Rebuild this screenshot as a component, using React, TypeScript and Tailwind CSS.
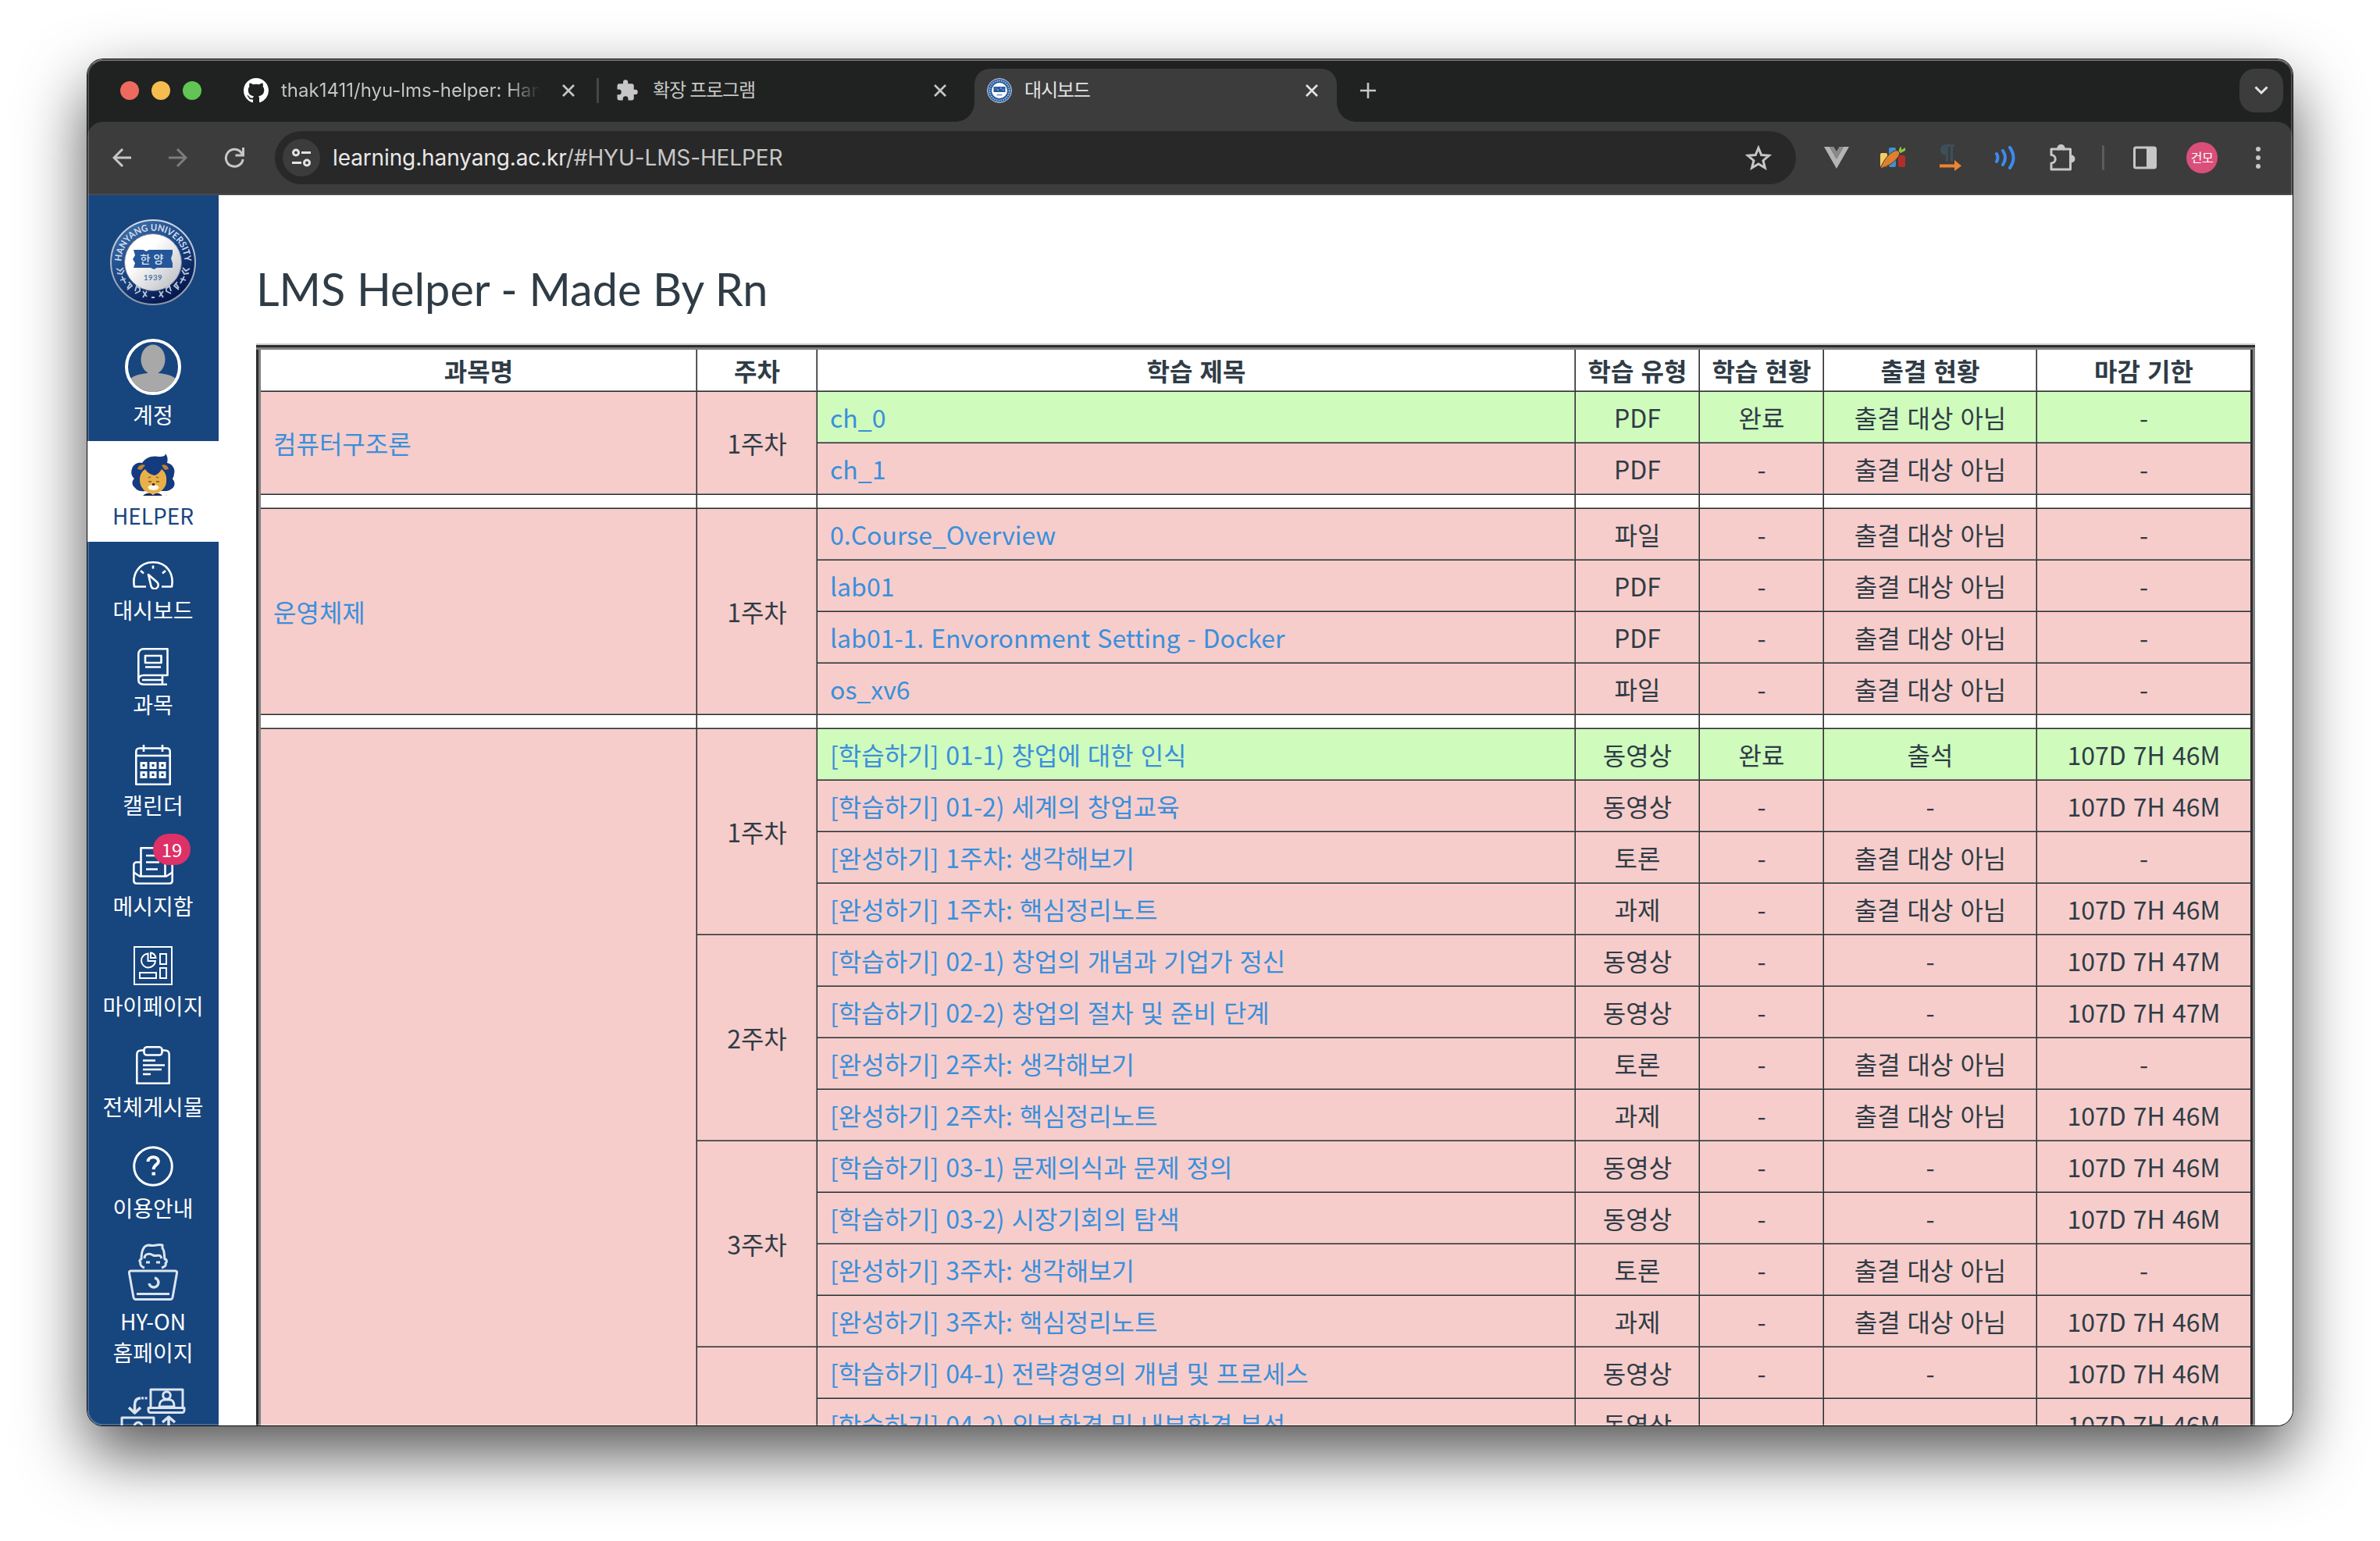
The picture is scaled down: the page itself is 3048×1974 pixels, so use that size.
import React from "react";

type Row = { title: string; type: string; status?: string; attend?: string; due?: string; done?: boolean };
type Week = { week: string; rows: Row[] };
type Subject = { name: string; weeks: Week[] };

const NA = "출결 대상 아님";

const weekRows = (n: number, a: string, b: string, due: string): Row[] => [
  { title: `[학습하기] 0${n}-1) ${a}`, type: "동영상", due },
  { title: `[학습하기] 0${n}-2) ${b}`, type: "동영상", due },
  { title: `[완성하기] ${n}주차: 생각해보기`, type: "토론", attend: NA },
  { title: `[완성하기] ${n}주차: 핵심정리노트`, type: "과제", attend: NA, due: "107D 7H 46M" },
];

const week1 = weekRows(1, "창업에 대한 인식", "세계의 창업교육", "107D 7H 46M");
week1[0] = { ...week1[0], done: true, status: "완료", attend: "출석" };

const subjects: Subject[] = [
  {
    name: "컴퓨터구조론",
    weeks: [
      {
        week: "1주차",
        rows: [
          { title: "ch_0", type: "PDF", status: "완료", attend: NA, done: true },
          { title: "ch_1", type: "PDF", attend: NA },
        ],
      },
    ],
  },
  {
    name: "운영체제",
    weeks: [
      {
        week: "1주차",
        rows: [
          { title: "0.Course_Overview", type: "파일", attend: NA },
          { title: "lab01", type: "PDF", attend: NA },
          { title: "lab01-1. Envoronment Setting - Docker", type: "PDF", attend: NA },
          { title: "os_xv6", type: "파일", attend: NA },
        ],
      },
    ],
  },
  {
    name: "",
    weeks: [
      { week: "1주차", rows: week1 },
      { week: "2주차", rows: weekRows(2, "창업의 개념과 기업가 정신", "창업의 절차 및 준비 단계", "107D 7H 47M") },
      { week: "3주차", rows: weekRows(3, "문제의식과 문제 정의", "시장기회의 탐색", "107D 7H 46M") },
      { week: "", rows: weekRows(4, "전략경영의 개념 및 프로세스", "외부환경 및 내부환경 분석", "107D 7H 46M") },
    ],
  },
];

const CELL = "flex shrink-0 items-center border-r border-b border-[#2c2c2c] pb-[2px] shadow-[inset_-1px_-1px_0_#808080]";
const LAST = "flex shrink-0 items-center border-b border-[#2c2c2c] pb-[2px] shadow-[inset_0_-1px_0_#808080]";

function TableHeader() {
  return (
    <div className="flex h-[54px] bg-white font-bold">
      <div className={`${CELL} w-[559px] justify-center`}>과목명</div>
      <div className={`${CELL} w-[154px] justify-center`}>주차</div>
      <div className={`${CELL} w-[971px] justify-center`}>학습 제목</div>
      <div className={`${CELL} w-[159px] justify-center`}>학습 유형</div>
      <div className={`${CELL} w-[159px] justify-center`}>학습 현황</div>
      <div className={`${CELL} w-[273px] justify-center`}>출결 현황</div>
      <div className={`${LAST} w-[273px] justify-center`}>마감 기한</div>
    </div>
  );
}

function Spacer() {
  return (
    <div className="flex h-[18px] bg-white">
      <div className={`${CELL} w-[559px]`} />
      <div className={`${CELL} w-[154px]`} />
      <div className={`${CELL} w-[971px]`} />
      <div className={`${CELL} w-[159px]`} />
      <div className={`${CELL} w-[159px]`} />
      <div className={`${CELL} w-[273px]`} />
      <div className={`${LAST} w-[273px]`} />
    </div>
  );
}

function LessonRow({ row }: { row: Row }) {
  return (
    <div className={`flex h-[66px] ${row.done ? "bg-[#cffbbd]" : "bg-[#f6cdcb]"}`}>
      <div className={`${CELL} w-[971px] pl-4 text-[#3a8fdc]`}>{row.title}</div>
      <div className={`${CELL} w-[159px] justify-center`}>{row.type}</div>
      <div className={`${CELL} w-[159px] justify-center`}>{row.status ?? "-"}</div>
      <div className={`${CELL} w-[273px] justify-center`}>{row.attend ?? "-"}</div>
      <div className={`${LAST} w-[273px] justify-center`}>{row.due ?? "-"}</div>
    </div>
  );
}

function LessonTable() {
  return (
    <div className="w-[2560px] border-t-2 border-[#c7cdd1] font-['Noto_Sans_CJK_KR',sans-serif] text-[32px] leading-[48px] text-[#2f3c46] [word-spacing:1.8px]">
      <div className="h-[3px] bg-[#2c2c2c]" />
      <div className="h-[3px] bg-[#808080]" />
      <div className="flex">
        <div className="w-[3px] shrink-0 bg-[#2c2c2c]" />
        <div className="w-[3px] shrink-0 bg-[#808080]" />
        <div className="w-[2548px] shrink-0">
          <TableHeader />
          {subjects.map((s, i) => (
            <React.Fragment key={i}>
              {i > 0 && <Spacer />}
              <div className="flex">
                <div className={`${CELL} w-[559px] bg-[#f6cdcb] pl-4 text-[#3a8fdc]`}>{s.name}</div>
                <div className="flex flex-col">
                  {s.weeks.map((w, j) => (
                    <div key={j} className="flex">
                      <div className={`${CELL} w-[154px] justify-center bg-[#f6cdcb]`}>{w.week}</div>
                      <div className="flex flex-col">
                        {w.rows.map((r) => (
                          <LessonRow key={r.title} row={r} />
                        ))}
                      </div>
                    </div>
                  ))}
                </div>
              </div>
            </React.Fragment>
          ))}
        </div>
        <div className="w-[3px] shrink-0 bg-[#2c2c2c]" />
        <div className="w-[3px] shrink-0 bg-[#808080]" />
      </div>
    </div>
  );
}

/* ---------- sidebar drawings ---------- */

function Seal() {
  return (
    <svg viewBox="0 0 110 110" className="h-[110px] w-[110px]">
      <defs>
        <linearGradient id="ring" x1="0" y1="0" x2="0.6" y2="1">
          <stop offset="0" stopColor="#4a78b2" />
          <stop offset="0.5" stopColor="#1c4a8a" />
          <stop offset="1" stopColor="#06174d" />
        </linearGradient>
        <linearGradient id="edge" x1="0" y1="0" x2="0" y2="1">
          <stop offset="0" stopColor="#d3dbe6" />
          <stop offset="1" stopColor="#8b93a8" />
        </linearGradient>
        <linearGradient id="disc" x1="0" y1="0" x2="1" y2="1">
          <stop offset="0.35" stopColor="#ffffff" />
          <stop offset="1" stopColor="#b4b6bc" />
        </linearGradient>
        <path id="arcTop" d="M14.500 55a40.500 40.500 0 0 1 81 0" />
      </defs>
      <circle cx="55" cy="55" r="54" fill="url(#ring)" stroke="url(#edge)" strokeWidth="2" />
      <circle cx="55" cy="55" r="36.500" fill="url(#disc)" stroke="#6d7d98" strokeWidth="1" />
      <text fill="#d3deeb" fontSize="12" fontWeight="700" fontFamily="Lato, sans-serif">
        <textPath href="#arcTop" startOffset="1" textLength="125" lengthAdjust="spacingAndGlyphs">HANYANG UNIVERSITY</textPath>
      </text>
      <g stroke="#b9c6d8" strokeWidth="1.800" fill="none">
        <path d="M8 63l5 3l4-4M9 69l6 1l3-5M13 78l7-2M15 73l5 9M22 88l4-6M24 80l4 5l-6 5M32 92l2-7l3 3M32 95l6-3l0-6M42 92l5 7M47 92l-5 8" />
        <path d="M102 63l-5 3l-4-4M101 69l-6 1l-3-5M97 78l-7-2M95 73l-5 9M88 88l-4-6M86 80l-4 5l6 5M78 92l-2-7l-3 3M78 95l-6-3l0-6M68 92l-5 7M63 92l5 8M53 100h4" />
      </g>
      <path d="M30 39h13l3 2l4-2h30v5l-2 6l2 6v6H60l-4 2l-4-2H30l2-6l-3-5l3-5z" fill="#24569a" />
      <text x="55.500" y="56" textAnchor="middle" fill="#dfe8f2" fontSize="14" fontWeight="500" letterSpacing="4" fontFamily="'Noto Sans CJK KR', sans-serif">한양</text>
      <text x="55" y="78" textAnchor="middle" fill="#4f74a8" fontSize="9.500" fontWeight="700" letterSpacing="0.500" fontFamily="Lato, sans-serif">1939</text>
    </svg>
  );
}

function Avatar() {
  return (
    <svg viewBox="0 0 72 72" className="h-[72px] w-[72px]">
      <defs>
        <clipPath id="face"><circle cx="36" cy="36" r="32" /></clipPath>
      </defs>
      <g clipPath="url(#face)" fill="#a8a8a8">
        <ellipse cx="36" cy="26.500" rx="15.500" ry="19" />
        <path d="M29 40h14v4c12 1 20 4 24 9v19H5V53c4-5 12-8 24-9z" />
      </g>
      <circle cx="36" cy="36" r="34" fill="none" stroke="#fff" strokeWidth="4" />
    </svg>
  );
}

function Lion() {
  return (
    <svg viewBox="0 0 56 54" className="h-[54px] w-[56px]">
      <path d="M14 12C18 5 27 2 36 4C41 4 44 3 44 0C47 4 47 8 46 12C52 13 57 19 55 26C55 29 53 31 53 33C57 36 56 43 52 45C48 49 42 48 38 48H18C13 49 8 48 5 44C1 41 0 36 4 32C0 29 -1 23 2 17C5 12 10 11 14 12Z" fill="#143a80" />
      <path d="M8 20C9 15 14 13 18 15L13 21ZM48 20C47 15 43 13 39 15L43 21Z" fill="#b98432" />
      <path d="M11 34C11 28 13 23 18 20C20 24 25 27 30 28C33 27 37 24 39 20C43 23 46 28 45 36C45 44 37 51 28 52C19 51 11 44 11 34Z" fill="#e9b04a" />
      <path d="M22 36h4M32 36h4M22 31l3-1M35 31l-3-1" stroke="#8f6a30" strokeWidth="1.800" />
      <ellipse cx="28.500" cy="43.500" rx="7" ry="3.500" fill="#fff8e8" />
      <ellipse cx="28.500" cy="39.500" rx="2" ry="1.500" fill="#3c2e1c" />
      <path d="M15 54C20 50 24 50 28 53C32 50 36 50 40 54Z" fill="#14285c" />
      <path d="M44 54l2-2v2z" fill="#c9cfdc" />
    </svg>
  );
}

const LINE = { fill: "none", stroke: "#fff", strokeWidth: 2.600, strokeLinecap: "butt" as const, strokeLinejoin: "round" as const };

function Gauge() {
  return (
    <svg viewBox="0 0 52 36" className="h-[36px] w-[52px]" {...LINE}>
      <path d="M17 32.500H2C-1 16 8 1.300 26 1.300S53 16 50 32.500H37" />
      <path d="M26 5.500v4M10 12l4 3.500M42 12l-4 3.500M20 17l11.500 10c2 2.500 1.500 6-1 7.500s-6 .5-7-2.500z" />
    </svg>
  );
}

function Book() {
  return (
    <svg viewBox="0 0 40 48" className="h-[48px] w-[40px]" {...LINE}>
      <path d="M1.300 41V8C1.300 4 4 1.300 8 1.300H38.500V35H8C4 35 1.300 37 1.300 41S4 46.700 8 46.700H38M32 35v11.500M6 41H32" />
      <path d="M10 10H30.500V19H10ZM10 24.500H30" />
    </svg>
  );
}

function Calendar() {
  return (
    <svg viewBox="0 0 46 52" className="h-[52px] w-[46px]" {...LINE}>
      <path d="M1.300 50.700V9C1.300 6 3 4.500 5.500 4.500H40.500C43 4.500 44.700 6 44.700 9V50.700ZM1.300 14H44.700M11 0V9M35 0V9" />
      <g strokeWidth="3" strokeLinejoin="miter">
        <path d="M8 23.500h6v6h-6zM20 23.500h6v6h-6zM32 23.500h6v6h-6zM8 35.500h6v6h-6zM20 35.500h6v6h-6zM32 35.500h6v6h-6z" />
      </g>
    </svg>
  );
}

function Inbox() {
  return (
    <svg viewBox="0 0 52 48" className="h-[48px] w-[52px]" {...LINE}>
      <path d="M10.500 37V1.300H41.500V37" />
      <path d="M10 19.500H5C2.500 19.500 1.300 21 1.300 23.500V43C1.300 45.500 2.500 46.700 5 46.700H47C49.500 46.700 50.700 45.500 50.700 43V23.500C50.700 21 49.500 19.500 47 19.500H42" />
      <path d="M1.300 32.500L9 37.500H43L50.700 32.500M17 11H34M17 19.500H34M17 28.500H32" />
    </svg>
  );
}

function MyPage() {
  return (
    <svg viewBox="0 0 50 50" className="h-[50px] w-[50px]" {...LINE} strokeWidth={2} strokeLinejoin="miter">
      <path d="M1 1H49V49H1Z" />
      <path d="M18.500 9.500A9 9 0 1 0 28 19H18.500ZM22 8.500A8 8 0 0 1 28.500 15H22ZM34 10H42V23H34ZM34 28H42V41H34ZM8 34H29V41H8Z" />
    </svg>
  );
}

function Clipboard() {
  return (
    <svg viewBox="0 0 44 49" className="h-[49px] w-[44px]" {...LINE}>
      <path d="M11 5.500H7C3 5.500 1.300 7.500 1.300 11V47.700H42.700V11C42.700 7.500 41 5.500 37 5.500H33" />
      <path d="M14 1.300H30C32 1.300 33.500 3 33.500 5V8C33.500 10 32 11.500 30 11.500H14C12 11.500 10.500 10 10.500 8V5C10.500 3 12 1.300 14 1.300ZM9 18.500H25M9 24.500H37M9 30H33M9 36H19" />
    </svg>
  );
}

function Help() {
  return (
    <svg viewBox="0 0 52 54" className="h-[54px] w-[52px]" {...LINE} strokeWidth={3}>
      <circle cx="26" cy="27" r="24.300" />
      <path d="M19.500 21C19.500 13.500 33 13.500 33 20.500C33 25 26.700 25 26.700 31" strokeWidth="4" />
      <path d="M26.700 34.500v4" strokeWidth="4.500" />
    </svg>
  );
}

function LaptopMan() {
  return (
    <svg viewBox="0 0 64 73" className="h-[73px] w-[64px]" {...LINE} strokeWidth={3} stroke="#dbe4ef">
      <path d="M21 31C17 30 15 27 16 24C14 23 15 20 17 20C17 10 19 2 27 2C33 4 39 0 44 2V6C47 9 46 14 47 20C50 20 50 24 48 25C49 28 47 30 43 31" />
      <path d="M21 19C21 13 27 12 32 15C37 17 41 12 43 19M23 24H28M36 24H41" />
      <path d="M4 35H60C62 35 63 36 62.500 38L57 69C56.500 71 56 71.500 54 71.500H10C8 71.500 7.500 71 7 69L1.500 38C1 36 2 35 4 35ZM11 64.500H53" />
      <path d="M34 44A6 6 0 1 1 27 51" strokeWidth="3.500" />
    </svg>
  );
}

function Remote() {
  return (
    <svg viewBox="0 0 84 50" className="h-[50px] w-[84px]" {...LINE} strokeWidth={3} stroke="#dbe4ef">
      <path d="M39 24V2H80V24M36 25.500H82V28C82 31 81 31.500 79 31.500H39C37 31.500 36 31 36 28ZM50 24C50 16 54 15 58 15H62C66 15 69 16 69 24Z" />
      <circle cx="59.500" cy="9.500" r="4.800" />
      <path d="M2 50V38H43V50M18 50C18 42 28 42 28 50" />
      <path d="M26 13C21 13 18.500 16 18.500 22V31M11 25L18.500 32L26 25" strokeWidth="3.500" />
      <path d="M27 13H36" strokeDasharray="3 1.500" />
      <path d="M62 50V38M54 44L62 37L70 44" strokeWidth="3.500" />
    </svg>
  );
}

function Item({ icon, label, cls, gap, active }: { icon: React.ReactNode; label: string; cls: string; gap: string; active?: boolean }) {
  return (
    <div className={`flex w-full shrink-0 flex-col items-center ${cls} ${active ? "bg-white text-[#17457e]" : "text-white"}`}>
      {icon}
      <div className={`whitespace-pre text-center leading-[40px] ${gap}`}>{label}</div>
    </div>
  );
}

function Sidebar() {
  return (
    <nav className="flex w-[168px] shrink-0 flex-col items-center bg-[#17457e] font-['Noto_Sans_CJK_KR',sans-serif] text-[28px]">
      <div className="flex h-[168px] shrink-0 pt-[31px]">
        <Seal />
      </div>
      <Item cls="h-[147px] pt-4" gap="mt-[5px]" icon={<Avatar />} label="계정" />
      <Item cls="h-[129px] pt-4" gap="mt-[5px]" icon={<Lion />} label="HELPER" active />
      <Item cls="h-[124px] pt-[25px]" gap="mt-1.5" icon={<Gauge />} label="대시보드" />
      <Item cls="h-[124px] pt-3" gap="mt-1" icon={<Book />} label="과목" />
      <Item cls="h-[131px] pt-3" gap="mt-[5px]" icon={<Calendar />} label="캘린더" />
      <Item
        cls="h-[127px] pt-3"
        gap="mt-[7px]"
        label="메시지함"
        icon={
          <div className="relative">
            <Inbox />
            <span className="absolute -top-[17px] left-[26px] flex h-10 w-12 items-center justify-center rounded-full bg-[#dd3167] text-[24px] leading-none">19</span>
          </div>
        }
      />
      <Item cls="h-[128px] pt-3" gap="mt-1.5" icon={<MyPage />} label="마이페이지" />
      <Item cls="h-[127px] pt-3" gap="mt-2" icon={<Clipboard />} label="전체게시물" />
      <Item cls="h-[126px] pt-3" gap="mt-1.5" icon={<Help />} label="이용안내" />
      <Item cls="h-[186px] pt-3" gap="mt-1.5" icon={<LaptopMan />} label={"HY-ON\n홈페이지"} />
      <Item cls="h-[120px] pt-[11px]" gap="mt-1" icon={<Remote />} label="" />
    </nav>
  );
}

/* ---------- browser chrome ---------- */

function Cross({ color }: { color: string }) {
  return (
    <svg viewBox="0 0 16 16" className="h-4 w-4 shrink-0" stroke={color} strokeWidth="2.600" fill="none">
      <path d="M1 1L15 15M15 1L1 15" />
    </svg>
  );
}

function MiniSeal() {
  return (
    <svg viewBox="0 0 32 32" className="h-8 w-8 shrink-0">
      <circle cx="16" cy="16" r="15.500" fill="#2a5a9c" stroke="#c5d3e6" strokeWidth="1" />
      <circle cx="16" cy="16" r="12.700" fill="none" stroke="#a9bfdc" strokeWidth="2" strokeDasharray="1.500 1.300" />
      <circle cx="16" cy="16" r="10" fill="#fff" />
      <path d="M8.500 11h15v7h-15z" fill="#28599b" />
      <path d="M11 13h1M13 15h2M17 13h2M19.500 15h2" stroke="#8fadd2" strokeWidth="1.500" />
      <path d="M12.500 21.500h7" stroke="#86a3cb" strokeWidth="2" />
    </svg>
  );
}

function TabStrip() {
  return (
    <div className="flex h-[80px] bg-[#202221] text-[24px] text-[#c7c7c7]">
      <div className="flex w-[200px] shrink-0 items-center gap-4 pl-[42px]">
        <span className="h-6 w-6 rounded-full bg-[#ed6a5e]" />
        <span className="h-6 w-6 rounded-full bg-[#f5bd4f]" />
        <span className="h-6 w-6 rounded-full bg-[#61c454]" />
      </div>
      <div className="flex w-[452px] shrink-0 items-center">
        <svg viewBox="0 0 16 16" className="h-8 w-8 shrink-0" fill="#fff">
          <path d="M8 0C3.580 0 0 3.580 0 8c0 3.540 2.290 6.530 5.470 7.590.4.070.55-.17.55-.38 0-.19-.01-.82-.01-1.490-2.010.37-2.530-.49-2.690-.94-.09-.23-.48-.94-.82-1.130-.28-.15-.68-.52-.01-.53.63-.01 1.080.58 1.230.82.72 1.210 1.870.87 2.330.66.07-.52.28-.87.51-1.070-1.780-.2-3.640-.89-3.640-3.950 0-.87.31-1.590.82-2.150-.08-.2-.36-1.020.08-2.120 0 0 .67-.21 2.200.82.640-.18 1.320-.27 2-.27s1.360.09 2 .27c1.530-1.040 2.200-.82 2.200-.82.44 1.100.16 1.920.08 2.120.51.56.82 1.270.82 2.150 0 3.070-1.870 3.750-3.650 3.950.29.25.54.73.54 1.480 0 1.070-.01 1.930-.01 2.200 0 .21.15.46.55.38A8.010 8.010 0 0 0 16 8c0-4.420-3.580-8-8-8z" />
        </svg>
        <div className="ml-4 w-[332px] overflow-hidden whitespace-nowrap bg-gradient-to-r from-[#c7c7c7] from-88% to-[#202221] bg-clip-text text-transparent">
          thak1411/hyu-lms-helper: Hanyang
        </div>
        <span className="ml-[28px] flex"><Cross color="#c7c7c7" /></span>
      </div>
      <div className="flex w-[484px] shrink-0 items-center">
        <span className="h-8 w-[3px] bg-[#454746]" />
        <svg viewBox="0 0 24 24" className="ml-[21px] h-[30px] w-[30px] shrink-0" fill="#c7c7c7">
          <path d="M20.500 11H19V7c0-1.100-.9-2-2-2h-4V3.500a2.500 2.500 0 0 0-5 0V5H4c-1.100 0-2 .9-2 2v3.800h1.500a2.700 2.700 0 0 1 0 5.400H2V20c0 1.100.9 2 2 2h3.800v-1.500a2.700 2.700 0 0 1 5.400 0V22H17c1.100 0 2-.9 2-2v-4h1.500a2.500 2.500 0 0 0 0-5z" />
        </svg>
        <span className="ml-[18px] w-[360px] whitespace-nowrap tracking-[-1.2px]">확장 프로그램</span>
        <Cross color="#c7c7c7" />
      </div>
      <div className="relative mt-3 flex h-[68px] w-[464px] shrink-0 items-center rounded-t-[20px] bg-[#3c3c3c] pb-3 pl-4 text-[#e3e3e3]">
        <span className="absolute bottom-0 -left-6 h-6 w-6 bg-[radial-gradient(circle_at_0_0,transparent_23.5px,#3c3c3c_24px)]" />
        <span className="absolute bottom-0 -right-6 h-6 w-6 bg-[radial-gradient(circle_at_100%_0,transparent_23.5px,#3c3c3c_24px)]" />
        <MiniSeal />
        <span className="ml-4 w-[360px] whitespace-nowrap tracking-[-1.2px]">대시보드</span>
        <Cross color="#e3e3e3" />
      </div>
      <svg viewBox="0 0 20 20" className="mt-[30px] ml-[30px] h-5 w-5" stroke="#c7c7c7" strokeWidth="2.600" fill="none">
        <path d="M10 0V20M0 10H20" />
      </svg>
      <div className="mt-3 mr-3 ml-auto flex h-14 w-14 items-center justify-center rounded-[20px] bg-[#3c3c3c]">
        <svg viewBox="0 0 18 12" className="h-3 w-[18px]" stroke="#e3e3e3" strokeWidth="3" fill="none">
          <path d="M1.500 1.500L9 9L16.500 1.500" />
        </svg>
      </div>
    </div>
  );
}

const GREY = "#c7c7c7";

function Toolbar() {
  return (
    <div className="bg-[#202221]">
      <div className="flex h-[94px] items-center rounded-t-[20px] border-b-2 border-[#4a4a4a] bg-[#3c3c3c]">
        <svg viewBox="0 0 24 24" className="ml-8 h-6 w-6" stroke={GREY} strokeWidth="3" fill="none">
          <path d="M24 12H2.500M13 1L2 12L13 23" />
        </svg>
        <svg viewBox="0 0 24 24" className="ml-12 h-6 w-6" stroke="#7c7c7c" strokeWidth="3" fill="none">
          <path d="M0 12H21.500M11 1L22 12L11 23" />
        </svg>
        <svg viewBox="0 0 26 26" className="ml-[47px] h-[26px] w-[26px]" stroke={GREY} strokeWidth="3" fill="none">
          <path d="M24.200 15A11 11 0 1 1 22 6.500L24 9M24.500 0V10H14.500" />
        </svg>
        <div className="ml-[39px] flex h-[68px] w-[1948px] items-center rounded-full bg-[#282828] pl-[10px] text-[28px] text-[#c7c7c7]">
          <span className="flex h-12 w-12 items-center justify-center rounded-full bg-[#3c3c3c]">
            <svg viewBox="0 0 24 24" className="h-6 w-6" stroke="#e3e3e3" strokeWidth="3" fill="none">
              <circle cx="5" cy="5.500" r="3.500" />
              <circle cx="19" cy="18.500" r="3.500" />
              <path d="M12 5.500H24M0 18.500H12" />
            </svg>
          </span>
          <span className="ml-4 whitespace-nowrap tracking-[-0.12px]">
            <span className="text-[#e8e8e8]">learning.hanyang.ac.kr</span>/#HYU-LMS-HELPER
          </span>
          <svg viewBox="0 0 34 32" className="mr-[31px] ml-auto h-8 w-[34px]" stroke={GREY} strokeWidth="3" fill="none" strokeLinejoin="miter">
            <path d="M17 3.500L20.700 12.600L30.500 13.300L23 19.700L25.400 29L17 24L8.600 29L11 19.700L3.500 13.300L13.300 12.600Z" />
          </svg>
        </div>
        <svg viewBox="0 0 32 28" className="ml-9 h-7 w-8">
          <path d="M0 0H7L16 15.500L25 0H32L16 28Z" fill="#b4b4b4" />
          <path d="M7 0H12.500L16 6L19.500 0H25L16 15.500Z" fill="#8a8a8a" />
        </svg>
        <svg viewBox="0 0 32 32" className="ml-10 h-8 w-8">
          <rect x="0" y="10" width="9" height="18" rx="2" fill="#f3cf63" />
          <rect x="11" y="3" width="9" height="25" rx="2" fill="#3f93cf" />
          <rect x="23" y="13" width="9" height="15" rx="2" fill="#b32d2d" />
          <path d="M23 9L25 3L27 2L27 6L32 3V7L26 10Z" fill="#8fc43f" />
          <path d="M0 30C3 22 10 10 19 7C23 6 26 9 24 13C20 21 10 27 0 30Z" fill="#e0802e" stroke="#3c3c3c" strokeWidth="1" />
        </svg>
        <svg viewBox="0 0 28 34" className="ml-[44px] h-[34px] w-7">
          <path d="M19 0H8A7 7 0 0 0 8 14V22H11V3H14V22H17V3H19Z" fill="#3d4f59" />
          <path d="M0 25.500H19V20L28 27.500L19 34V29.500H0Z" fill="#ec8530" />
        </svg>
        <svg viewBox="0 0 28 30" className="ml-[42px] h-[30px] w-7" stroke="#3b8cf0" strokeWidth="4" strokeLinecap="round" fill="none">
          <path d="M3 10Q6 15 3 20M11 6Q17 15 11 24M20 2Q29 15 20 28" />
        </svg>
        <svg viewBox="0 0 36 36" className="ml-[41px] h-9 w-9" stroke={GREY} strokeWidth="3" fill="none" strokeLinejoin="round">
          <path d="M4 7H13V6A3.500 3.500 0 0 1 20 6V7H28.500V16H29.500A3.500 3.500 0 0 1 29.500 23H28.500V33H4V25A5.200 5.200 0 0 0 4 14.500Z" />
          <path d="M13 6A3.500 3.500 0 0 1 20 6V7H13Z" fill={GREY} />
          <path d="M28.500 16A3.500 3.500 0 0 1 28.500 23Z" fill={GREY} />
        </svg>
        <span className="ml-[33px] h-8 w-[3px] rounded bg-[#5c5c5c]" />
        <svg viewBox="0 0 30 30" className="ml-[37px] h-[30px] w-[30px]">
          <rect x="1.500" y="2" width="27" height="26" rx="2" fill="none" stroke={GREY} strokeWidth="3" />
          <path d="M17 2H28V28H17Z" fill={GREY} />
        </svg>
        <span className="ml-[38px] flex h-10 w-10 items-center justify-center rounded-full bg-[#da4f7a] text-[16px] leading-none tracking-[-0.5px] text-white">
          건모
        </span>
        <svg viewBox="0 0 6 28" className="ml-[49px] h-7 w-[6px]" fill={GREY}>
          <circle cx="3" cy="3" r="3" />
          <circle cx="3" cy="14" r="3" />
          <circle cx="3" cy="25" r="3" />
        </svg>
      </div>
    </div>
  );
}

export default function App() {
  return (
    <div className="h-[1974px] w-[3048px] overflow-hidden bg-white px-[112px] pt-[76px] font-['Inter','Noto_Sans_CJK_KR',sans-serif]">
      <div className="h-[1750px] w-[2824px] rounded-[20px] shadow-[0_0_0_1px_#0a0a0a,0_36px_84px_rgba(0,0,0,0.68)]">
        <div className="relative flex h-full w-full flex-col overflow-hidden rounded-[20px] bg-white">
          <TabStrip />
          <Toolbar />
          <div className="flex h-[1576px] overflow-hidden">
            <Sidebar />
            <main className="pt-[82px] pl-12">
              <h1 className="h-[108px] font-['Lato',sans-serif] text-[57.6px] leading-[76px] text-[#2f3c46]">LMS Helper - Made By Rn</h1>
              <LessonTable />
            </main>
          </div>
          <div className="pointer-events-none absolute inset-0 rounded-[20px] border-2 border-white/20 border-t-white/35" />
        </div>
      </div>
    </div>
  );
}
